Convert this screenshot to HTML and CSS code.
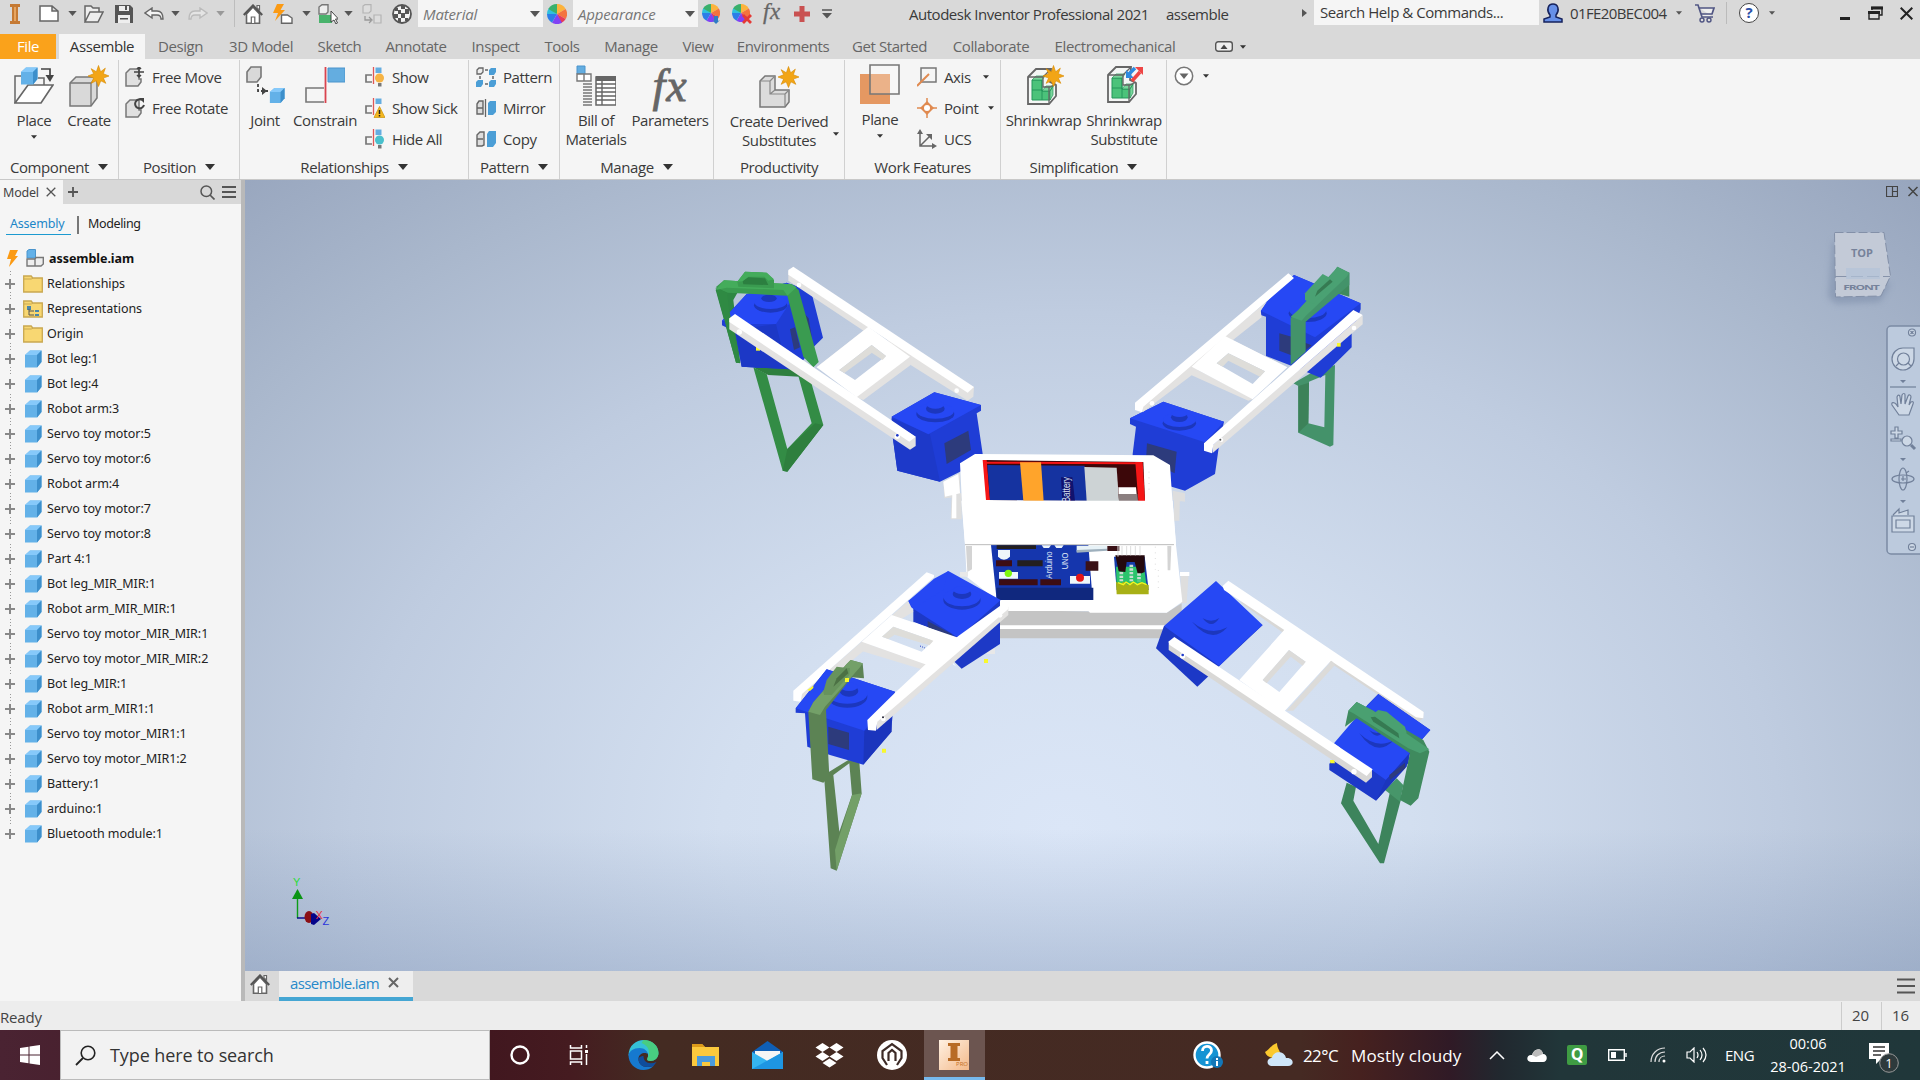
FILE: index.html
```html
<!DOCTYPE html>
<html lang="en">
<head>
<meta charset="utf-8">
<title>Autodesk Inventor Professional 2021</title>
<link rel="stylesheet" href="styles.css">
</head>
<body>
<svg class="defs" width="0" height="0">
  <symbol id="caret" viewBox="0 0 10 6"><path d="M0 0h10L5 6z" fill="currentColor"/></symbol>
  <symbol id="cube" viewBox="0 0 18 18"><path d="M1 5 6 .5h11.500V12L13 17.500H1z" fill="#63b1e8"/><path d="M1 5 6 .5h11.500L13 5z" fill="#86c9fa"/><path d="M13 5 17.500.5V12L13 17.500z" fill="#3d8fcb"/></symbol>
  <symbol id="folder" viewBox="0 0 20 18"><path d="M.7 1h7.500l1.500 2H19.300V17H.7z" fill="#f8d772" stroke="#c9a850" stroke-width="1.300"/><path d="M.7 4h8l1-1" fill="none" stroke="#c9a850"/></symbol>
  <symbol id="home" viewBox="0 0 20 20"><path d="M3.500 10v9.300h13V10L10 3z" fill="#fff" stroke="#666" stroke-width="1.600"/><path d="M.8 11 10 1.500l9.200 9.500" fill="none" stroke="#555" stroke-width="2.200"/><path d="M14 1.500h2.500V6L14 4zM8.300 19v-6h3.500v6" fill="#fff" stroke="#666" stroke-width="1.200"/></symbol>
  <symbol id="wheel" viewBox="-10 -10 20 20"><path d="M0 0 0-10A10 10 0 0 1 8.700-5z" fill="#fcb33c"/><path d="M0 0 8.700-5A10 10 0 0 1 8.700 5z" fill="#f4733e"/><path d="M0 0 8.700 5A10 10 0 0 1 4 9.200z" fill="#e63b58"/><path d="M0 0 5 8.700A10 10 0 0 1-5 8.700z" fill="#8142f4"/><path d="M0 0-5 8.700A10 10 0 0 1-10 0z" fill="#2c7de8"/><path d="M0 0-10 0A10 10 0 0 1-8 -6z" fill="#2fc0dd"/><path d="M0 0-8.700-5A10 10 0 0 1 0-10z" fill="#39b06b"/></symbol>
  <symbol id="star" viewBox="-10 -10 20 20"><path d="M0-10 2-4 6.500-7.500 4.600-2.200 10 0 4.600 2 7 7 2.200 4.600 0 10-2.200 4.600-7 7-4.600 2-10 0-4.600-2.200-7-7-2-4z" fill="#f2a516" stroke="#d88a00" stroke-width=".6"/></symbol>
  <symbol id="rel" viewBox="0 0 20 20"><path d="M7 8H1v7h6" fill="none" stroke="#777" stroke-width="1.700"/><path d="M8.500 0v17" stroke="#e05656" stroke-width="1.300"/><path d="M10.500.500h6v5.500h-6z" fill="#64ade0"/></symbol>
  <symbol id="piece" viewBox="0 0 20 20"><path d="M1 6 5 2h9v10h2v3l-3 4H1z" fill="#e0e0e0" stroke="#777" stroke-width="1.500"/></symbol>
  <symbol id="shrink" viewBox="0 0 30 38"><path d="M1 9 9 1h15l-1 13 6 3v11l-7 8H1z" fill="#f4f6f5" stroke="#666" stroke-width="1.800"/><path d="M5 12h10v11h8v9H5z" fill="#4bc27a" stroke="#25965a"/><path d="M5 12l4-4h9l-3 4zM15 23l4-5h7l-3 5zM23 23l3-5v9l-3 5z" fill="#7ad69c" stroke="#25965a" stroke-width=".7"/><path d="M5 22h10v10M15 12v11" fill="none" stroke="#25965a"/><path d="M1 9h15l8-8M16 9v10h7l6-3M22 19v17" fill="none" stroke="#666" stroke-width="1.300"/></symbol>
</svg>

<div class="app">
  <header class="titlebar">
    <div class="quick">
      <svg class="q-logo" viewBox="0 0 10 20"><path d="M0 0h10v3H8v14h2v3H0v-3h2V3H0z" fill="#c57a34"/><path d="M4 3h2v14H4z" fill="#e8a661"/></svg>
      <svg class="q-new" viewBox="0 0 20 17"><path d="M1 1h12l6 5v10H1zM13 1v5h6" fill="#fff" stroke="#666" stroke-width="1.500"/></svg>
      <svg class="caret q-c1"><use href="#caret"/></svg>
      <svg class="q-open" viewBox="0 0 20 18"><path d="M1 17V1h6l2 2h6v4M1 17 6 7h13l-5 10z" fill="#eee" stroke="#666" stroke-width="1.500"/></svg>
      <svg class="q-save" viewBox="0 0 18 18"><path d="M0 0h15l3 3v15H0z" fill="#555"/><path d="M4 1h10v5H4zM3 10h12v8H3z" fill="#eee"/><path d="M10 1h2v4h-2zM5 13h8v1.500H5z" fill="#555"/></svg>
      <svg class="q-undo" viewBox="0 0 20 14"><path d="M8 1 1 6l7 5V8h5c2 0 4 1 4 4h2c0-5-2-8-6-8H8z" fill="#f4f4f4" stroke="#666" stroke-width="1.400"/></svg>
      <svg class="caret q-c2"><use href="#caret"/></svg>
      <svg class="q-redo" viewBox="0 0 20 14"><path d="M12 1l7 5-7 5V8H7c-2 0-4 1-4 4H1c0-5 2-8 6-8h5z" fill="#e4e4e4" stroke="#bbb" stroke-width="1.400"/></svg>
      <svg class="caret q-c3"><use href="#caret"/></svg>
      <i class="q-sep"></i>
      <svg class="q-home"><use href="#home"/></svg>
      <svg class="q-bolt" viewBox="0 0 20 20"><path d="M4 0h7L7.500 6H12L2 17l3-8H0z" fill="#fb9a13"/><path d="M8.500 11h6l4.500 3v5.300H8.500z" fill="#fff" stroke="#666" stroke-width="1.400"/></svg>
      <svg class="caret q-c4"><use href="#caret"/></svg>
      <svg class="q-sel" viewBox="0 0 20 20"><path d="M1 3 4 .700h6V8L8 10H1z" fill="#eee" stroke="#777" stroke-width="1.400"/><path d="M1 11h13v8H1z" fill="#49b36c"/><path d="M13 7v11l3-2 2 4 1.500-1-2-4h3z" fill="#fff" stroke="#444"/></svg>
      <svg class="caret q-c5"><use href="#caret"/></svg>
      <svg class="q-adj" viewBox="0 0 20 20"><path d="M1 2 3 .700h6V7L7 9H1zM12 11h7v8h-7z" fill="#ddd" stroke="#b4b4b4" stroke-width="1.200"/><path d="M3 12v4h6M7 13l3 3-3 3" fill="none" stroke="#999" stroke-width="1.300"/></svg>
      <svg class="q-ball" viewBox="0 0 20 20"><circle cx="10" cy="10" r="9" fill="#f3f3f3" stroke="#555" stroke-width="1.800"/><path d="M3 4h3v3H3zM9 1h4v4H9zM6 6h3v4H6zM13 5h4v5h-4zM2 10h4v4H2zM9 9h4v5H9zM6 14h3v4H6zM13 14h3v3h-3z" fill="#555"/></svg>
      <div class="combo q-mat">Material<svg class="caret wide"><use href="#caret"/></svg></div>
      <svg class="q-wheel"><use href="#wheel"/></svg>
      <div class="combo q-app">Appearance<svg class="caret wide"><use href="#caret"/></svg></div>
      <svg class="q-w2" viewBox="0 0 20 20"><use href="#wheel" width="18" height="18"/><path d="M12 12h4v5l2-1-4 4-4-4 2 1z" fill="#2e7cc4"/></svg>
      <svg class="q-w3" viewBox="0 0 20 20"><use href="#wheel" width="18" height="18"/><path d="M11 11l8 8M19 11l-8 8" stroke="#e53935" stroke-width="2.800"/></svg>
      <span class="fx small">fx</span>
      <svg class="q-plus" viewBox="0 0 16 16"><path d="M5.500 0h5v5.500H16v5h-5.500V16h-5v-5.500H0v-5h5.500z" fill="#c95151"/></svg>
      <svg class="q-more" viewBox="0 0 10 10"><path d="M0 1h10" stroke="#555" stroke-width="1.500"/><path d="M0 4h10L5 9.500z" fill="#555"/></svg>
    </div>
    <div class="apptitle"><span>Autodesk Inventor Professional 2021</span><span>assemble</span></div>
    <div class="account">
      <svg class="a-arrow" viewBox="0 0 5 8"><path d="M0 0l5 4-5 4z" fill="#555"/></svg>
      <div class="help-search">Search Help &amp; Commands...</div>
      <svg class="a-user" viewBox="0 0 20 20"><path d="M1 19v-3l6-2v-2C3 7 5 1 10 1s7 6 3 11v2l6 2v3z" fill="#6790e8" stroke="#16225c" stroke-width="1.500"/></svg>
      <span class="a-name">01FE20BEC004</span>
      <svg class="caret tiny a-c1"><use href="#caret"/></svg>
      <svg class="a-cart" viewBox="0 0 20 19"><path d="M0 1h3l4 12h11M4 4h15l-2 6H6" fill="#eee" stroke="#505583" stroke-width="1.700"/><circle cx="7" cy="16" r="2" fill="#ddd" stroke="#505583" stroke-width="1.400"/><circle cx="14" cy="16" r="2" fill="#ddd" stroke="#505583" stroke-width="1.400"/></svg>
      <i class="a-sep"></i>
      <span class="a-help">?</span>
      <svg class="caret tiny a-c2"><use href="#caret"/></svg>
      <svg class="a-min" viewBox="0 0 10 14"><path d="M0 12.500h10" stroke="#222" stroke-width="3"/></svg>
      <svg class="a-res" viewBox="0 0 15 14"><path d="M4 4V1.500h10V9h-3M1 6.500h10V13H1z" fill="none" stroke="#222" stroke-width="1.400"/><path d="M3 2h12M0 6.500h12" stroke="#222" stroke-width="2.800"/></svg>
      <svg class="a-x" viewBox="0 0 13 13"><path d="M.7.700l11.600 11.600M12.300.700L.7 12.300" stroke="#222" stroke-width="2"/></svg>
    </div>
  </header>

  <nav class="tabs">
    <span class="file">File</span><span class="active">Assemble</span><span class="t1">Design</span><span class="t2">3D Model</span><span class="t3">Sketch</span><span class="t4">Annotate</span><span class="t5">Inspect</span><span class="t6">Tools</span><span class="t7">Manage</span><span class="t8">View</span><span class="t9">Environments</span><span class="t10">Get Started</span><span class="t11">Collaborate</span><span class="t12">Electromechanical</span>
    <svg class="t-btn" viewBox="0 0 18 11"><rect x=".7" y=".7" width="16.600" height="9.600" rx="2.500" fill="#eee" stroke="#555" stroke-width="1.400"/><path d="M5.500 8h7L9 3.500z" fill="#444"/></svg>
    <svg class="caret tiny dark"><use href="#caret"/></svg>
  </nav>

  <section class="ribbon">
    <div class="panel p-comp">
      <div class="body">
        <div class="big b-place"><svg viewBox="0 0 40 42"><path d="M8 11H1v27M24 13h6v7" fill="none" stroke="#666" stroke-width="1.500"/><path d="M14 20h25L27 38H1z" fill="#fff" stroke="#666" stroke-width="1.700"/><use href="#cube" x="6" y="2" width="18" height="18"/><path d="M27 4h9v8" fill="none" stroke="#444" stroke-width="1.700"/><path d="M31.500 10h8.500l-4 7z" fill="#444"/></svg><span>Place</span><svg class="caret tiny dark"><use href="#caret"/></svg></div>
        <div class="big b-create"><svg viewBox="0 0 40 42"><path d="M1 18 7 12h21v21l-6 8H1z" fill="#d9d9d9" stroke="#777" stroke-width="1.500"/><path d="M1 18h21v23M22 18l6-6" fill="none" stroke="#777" stroke-width="1.300"/><use href="#star" x="19" y="0" width="21" height="22"/></svg><span>Create</span></div>
      </div>
      <div class="label">Component<svg class="caret wide dark"><use href="#caret"/></svg></div>
    </div>
    <div class="panel p-pos">
      <div class="rows">
        <div><svg viewBox="0 0 20 20"><use href="#piece" width="20" height="20"/><path d="M14 0v10M9 5h10M12 2l2-2 2 2M12 8l2 2 2-2" fill="none" stroke="#444" stroke-width="1.500"/></svg>Free Move</div>
        <div><svg viewBox="0 0 20 20"><use href="#piece" width="20" height="20"/><path d="M17 2a4.500 4.500 0 1 0 2 5" fill="none" stroke="#444" stroke-width="2"/><path d="M14 0h5v5z" fill="#444"/></svg>Free Rotate</div>
      </div>
      <div class="label">Position<svg class="caret wide dark"><use href="#caret"/></svg></div>
    </div>
    <div class="panel p-rel">
      <div class="body">
        <div class="big b-joint"><svg viewBox="0 0 40 42"><path d="M2 7 6 2h10v10l-4 5H2z" fill="#d9d9d9" stroke="#777" stroke-width="1.600"/><path d="M13 19v7h10" fill="none" stroke="#444" stroke-width="1.800" stroke-dasharray="3 2"/><path d="M17 22l5 4-5 4z" fill="#444"/><use href="#cube" x="24" y="22" width="16" height="17"/></svg><span>Joint</span></div>
        <div class="big b-cons"><svg viewBox="0 0 40 42"><path d="M19 23H1v14h18" fill="none" stroke="#777" stroke-width="1.600"/><path d="M23 3h17v14H23z" fill="#64ade0" stroke="#4a94cc"/><path d="M20.500 2v36" stroke="#d9434e" stroke-width="1.800"/></svg><span>Constrain</span></div>
        <div class="rows">
          <div><svg viewBox="0 0 20 20"><use href="#rel" width="20" height="20"/><circle cx="14.500" cy="11" r="4.500" fill="#f6b445"/><path d="M13 16h3.500v3.500H13z" fill="#777"/></svg>Show</div>
          <div><svg viewBox="0 0 20 20"><use href="#rel" width="20" height="20"/><path d="M14.500 8.500 20 19.500H9z" fill="#f5b71e" stroke="#c8920c" stroke-width=".7"/><path d="M14.500 12v4M14.500 17v1.500" stroke="#222" stroke-width="1.500"/></svg>Show Sick</div>
          <div><svg viewBox="0 0 20 20"><use href="#rel" width="20" height="20"/><circle cx="14.500" cy="11" r="4.500" fill="#49c0cc"/><path d="M13 16h3.500v3.500H13z" fill="#777"/></svg>Hide All</div>
        </div>
      </div>
      <div class="label">Relationships<svg class="caret wide dark"><use href="#caret"/></svg></div>
    </div>
    <div class="panel p-pat">
      <div class="rows">
        <div><svg viewBox="0 0 20 20"><path d="M1 3l2-2h4v4L5 7H1z" fill="#eee" stroke="#666" stroke-width="1.300"/><path d="M9 3h3M4 9v3M17 9v3M9 17h3" stroke="#666" stroke-width="1.500"/><path d="M13 3l2-2h5v4l-2 3h-5zM0 15l2-2h5v4l-2 3H0zM13 15l2-2h5v4l-2 3h-5z" fill="#4b9ed6"/></svg>Pattern</div>
        <div><svg viewBox="0 0 20 20"><path d="M1 6 3 3h4v13H1zM1 10h6" fill="#ddd" stroke="#666" stroke-width="1.400"/><path d="M9.500 1v18" stroke="#666" stroke-width="1.300"/><path d="M12 5 14 3h6v11l-3 3h-5z" fill="#4b9ed6"/></svg>Mirror</div>
        <div><svg viewBox="0 0 20 20"><path d="M1 6 4 3h4v13l-2 1H1zM1 10h6" fill="#ddd" stroke="#666" stroke-width="1.400"/><path d="M11 5 13 2h7v12l-3 4h-6z" fill="#4b9ed6"/></svg>Copy</div>
      </div>
      <div class="label">Pattern<svg class="caret wide dark"><use href="#caret"/></svg></div>
    </div>
    <div class="panel p-man">
      <div class="body">
        <div class="big b-bom"><svg viewBox="0 0 40 42"><path d="M1 1h8v8H1z" fill="#64ade0" stroke="#4a94cc"/><path d="M1 9h7v7H1zM8 9h7v7H8z" fill="#fff" stroke="#777" stroke-width="1.400"/><path d="M7 19h9M7 22h9M7 25h9M7 28h9M7 31h9M7 34h9M7 37h9M7 40h9" stroke="#777" stroke-width="1.300"/><path d="M20 12h20v28H20z" fill="#fff" stroke="#666" stroke-width="1.500"/><path d="M20 14h20M20 19h20M20 23h20M20 27h20M20 31h20M20 35h20M26 14v26" stroke="#666" stroke-width="1.400"/><path d="M20 11h20v5H20z" fill="#666"/></svg><span>Bill of<br>Materials</span></div>
        <div class="big b-par"><div class="fx">fx</div><span>Parameters</span></div>
      </div>
      <div class="label">Manage<svg class="caret wide dark"><use href="#caret"/></svg></div>
    </div>
    <div class="panel p-prod">
      <div class="body">
        <div class="big b-der"><svg viewBox="0 0 40 42"><path d="M1 15 6 10h10v14h14v12l-4 5H1z" fill="#dcdcdc" stroke="#777" stroke-width="1.500"/><path d="M1 15h10v13h15v12M11 15l5-5M11 28l5-4M26 28l4-4" fill="none" stroke="#888" stroke-width="1.200"/><use href="#star" x="19" y="0" width="21" height="22"/></svg><span>Create Derived<br>Substitutes</span></div>
        <svg class="caret tiny dark side"><use href="#caret"/></svg>
      </div>
      <div class="label">Productivity</div>
    </div>
    <div class="panel p-work">
      <div class="body">
        <div class="big b-plane"><svg viewBox="0 0 40 42"><path d="M0 10h30v30H0z" fill="#e59862"/><path d="M10 1h29v29H10z" fill="#fff" fill-opacity=".25" stroke="#777" stroke-width="1.600"/></svg><span>Plane</span><svg class="caret tiny dark"><use href="#caret"/></svg></div>
        <div class="rows">
          <div><svg viewBox="0 0 20 20"><path d="M4 1h15v14H4z" fill="none" stroke="#777" stroke-width="1.500"/><path d="M0 19 12 7" stroke="#e08a50" stroke-width="2"/></svg>Axis<svg class="caret tiny dark c-a"><use href="#caret"/></svg></div>
          <div><svg viewBox="0 0 20 20"><path d="M10 3l7 7-7 7-7-7z" fill="#e08a50"/><path d="M10 0v20M0 10h20" stroke="#e08a50" stroke-width="1.500"/><circle cx="10" cy="10" r="3" fill="#fff"/></svg>Point<svg class="caret tiny dark c-p"><use href="#caret"/></svg></div>
          <div><svg viewBox="0 0 20 20"><path d="M3 2v15h15M3 17 13 7" fill="none" stroke="#666" stroke-width="1.500"/><path d="M0 5 3 0l3 5zM15 14l5 3-5 3zM9 5h6v6z" fill="#666"/></svg>UCS</div>
        </div>
      </div>
      <div class="label">Work Features</div>
    </div>
    <div class="panel p-simp">
      <div class="body">
        <div class="big b-shr"><svg viewBox="0 0 40 42"><use href="#shrink" x="0" y="3" width="36" height="38"/><use href="#star" x="19" y="0" width="21" height="22"/></svg><span>Shrinkwrap</span></div>
        <div class="big b-sub"><svg viewBox="0 0 40 42"><use href="#shrink" x="0" y="1" width="36" height="38"/><path d="M24 10 31 3" stroke="#2d8ae0" stroke-width="3.500"/><path d="M22 5v8h8z" fill="#2d8ae0"/><path d="M28 16l8-9" stroke="#ee4545" stroke-width="3.500"/><path d="M31 2h8v8z" fill="#ee4545"/></svg><span>Shrinkwrap<br>Substitute</span></div>
      </div>
      <div class="label">Simplification<svg class="caret wide dark"><use href="#caret"/></svg></div>
    </div>
    <div class="extra"><svg viewBox="0 0 20 20"><circle cx="10" cy="10" r="8.700" fill="#fff" stroke="#777" stroke-width="1.500"/><path d="M5.500 7.500h9L10 13z" fill="#666"/></svg><svg class="caret tiny dark"><use href="#caret"/></svg></div>
  </section>

  <main class="work">
    <aside class="browser">
      <div class="btabs">
        <span class="model">Model<svg viewBox="0 0 10 10"><path d="M.7.700l8.600 8.600M9.300.700L.7 9.300" stroke="#555" stroke-width="1.300"/></svg></span>
        <svg class="plus" viewBox="0 0 10 10"><path d="M5 0v10M0 5h10" stroke="#555" stroke-width="1.800"/></svg>
        <svg class="find" viewBox="0 0 15 15"><circle cx="6.300" cy="6.300" r="5.300" fill="none" stroke="#555" stroke-width="1.500"/><path d="M10 10l4.500 4.500" stroke="#555" stroke-width="1.700"/></svg>
        <svg class="menu" viewBox="0 0 14 12"><path d="M0 1h14M0 6h14M0 11h14" stroke="#555" stroke-width="1.800"/></svg>
      </div>
      <div class="modes"><span class="on">Assembly</span><i></i><span>Modeling</span></div>
      <div class="root"><svg class="bolt" viewBox="0 0 11 17"><path d="M3 0h8L8 6h3L2 17l2-8H0z" fill="#fb9a13"/></svg><svg class="asm" viewBox="0 0 18 18"><path d="M1 2 3 .500h6.500V9H1z" fill="#63b1e8" stroke="#4a94cc"/><path d="M1 10h8v7H1zM9 10l1-1.500h7.300V15L15 17H9z" fill="#eee" stroke="#777" stroke-width="1.400"/></svg>assemble.iam</div>
      <ul class="tree">
        <li><i></i><svg><use href="#folder"/></svg>Relationships</li>
        <li><i></i><svg viewBox="0 0 20 18"><use href="#folder" width="20" height="18"/><path d="M4 6h4v4H4zM12 10h4v2h-4zM12 14h4v2h-4z" fill="#4b86a8"/><path d="M6 9v6h5M6 11h5" fill="none" stroke="#555"/></svg>Representations</li>
        <li><i></i><svg><use href="#folder"/></svg>Origin</li>
        <li><i></i><svg><use href="#cube"/></svg>Bot leg:1</li>
        <li><i></i><svg><use href="#cube"/></svg>Bot leg:4</li>
        <li><i></i><svg><use href="#cube"/></svg>Robot arm:3</li>
        <li><i></i><svg><use href="#cube"/></svg>Servo toy motor:5</li>
        <li><i></i><svg><use href="#cube"/></svg>Servo toy motor:6</li>
        <li><i></i><svg><use href="#cube"/></svg>Robot arm:4</li>
        <li><i></i><svg><use href="#cube"/></svg>Servo toy motor:7</li>
        <li><i></i><svg><use href="#cube"/></svg>Servo toy motor:8</li>
        <li><i></i><svg><use href="#cube"/></svg>Part 4:1</li>
        <li><i></i><svg><use href="#cube"/></svg>Bot leg_MIR_MIR:1</li>
        <li><i></i><svg><use href="#cube"/></svg>Robot arm_MIR_MIR:1</li>
        <li><i></i><svg><use href="#cube"/></svg>Servo toy motor_MIR_MIR:1</li>
        <li><i></i><svg><use href="#cube"/></svg>Servo toy motor_MIR_MIR:2</li>
        <li><i></i><svg><use href="#cube"/></svg>Bot leg_MIR:1</li>
        <li><i></i><svg><use href="#cube"/></svg>Robot arm_MIR1:1</li>
        <li><i></i><svg><use href="#cube"/></svg>Servo toy motor_MIR1:1</li>
        <li><i></i><svg><use href="#cube"/></svg>Servo toy motor_MIR1:2</li>
        <li><i></i><svg><use href="#cube"/></svg>Battery:1</li>
        <li><i></i><svg><use href="#cube"/></svg>arduino:1</li>
        <li><i></i><svg><use href="#cube"/></svg>Bluetooth module:1</li>
      </ul>
    </aside>

    <div class="docarea">
      <div class="viewport">
        <svg class="scene" viewBox="245 180 1675 791">
          <g transform="translate(700 250) scale(.33333)">
            <!-- servos under the chassis -->
            <g>
              <path d="M575 500 703 427 843 465V482L830 490 850 625 780 665 720 695 592 662 578 560z" fill="#1f3dd6"/>
              <path d="M575 505 578 560 592 662 720 695 690 553z" fill="#1d39c9"/>
              <path d="M575 500 703 427 843 465 685 553z" fill="#2648f4"/>
              <ellipse cx="706" cy="492" rx="57" ry="25" fill="#1c37bd"/><ellipse cx="706" cy="483" rx="56" ry="23" fill="#2648f4"/>
              <ellipse cx="706" cy="476" rx="28" ry="15" fill="#1c37bd"/><ellipse cx="706" cy="464" rx="26" ry="12" fill="#2648f4"/>
              <path d="M733 580 805 542 813 600 740 642z" fill="#2d3b7c"/>
            </g>
            <g transform="translate(1140 0)">
              <path d="M150 505 250 455 432 515 418 580 405 672 315 722 275 710 158 650V612L168 530 150 522z" fill="#1f3dd6"/>
              <path d="M150 505 250 455 432 515 375 577z" fill="#2648f4"/>
              <ellipse cx="298" cy="520" rx="50" ry="22" fill="#1c37bd"/><ellipse cx="298" cy="510" rx="49" ry="21" fill="#2648f4"/><ellipse cx="298" cy="502" rx="25" ry="14" fill="#1c37bd"/><ellipse cx="298" cy="491" rx="24" ry="10" fill="#2648f4"/>
              <path d="M201 580 290 605 284 670 198 630z" fill="#2d3b7c"/>
            </g>
            <!-- chassis -->
            <path d="M730 695 780 670V740L733 745zM755 730H785V808H752zM1418 722 1455 730 1455 755 1418 750zM1422 735 1440 735 1438 812 1422 812zM1442 970 1466 970 1460 1060 1442 1060z" fill="#dedede"/>
            <path d="M730 695 775 672 780 730 735 740zM757 730h12v75h-14zM1440 966h28v12h-28z" fill="#fff"/>
            <path d="M900 1080 1400 1088 1445 1060V1120L1400 1128V1165H900z" fill="#c4c4c4"/>
            <path d="M900 1126H1400V1138L1200 1137H900z" fill="#fff"/>
            <path d="M780 640 825 612 1360 616 1410 645 1415 720 1428 885 1447 1055 1400 1088 1170 1088 1165 1083 905 1083 890 1050 800 980 795 885 785 740z" fill="#fff"/>
            <path d="M850 630 1330 636 1335 752 860 750z" fill="#3c0709"/>
            <path d="M848 630h12l10 120h-12zM860 635l450 2v6l-450-2zM1306 636h22l7 117h-20z" fill="#f51616"/>
            <path d="M862 645 1154 647 1162 752 870 750z" fill="#1533a0"/>
            <path d="M960 637 1023 637 1031 753 970 752z" fill="#ffa42b"/>
            <path d="M1153 651 1250 653 1257 753 1160 753z" fill="#cdd3d5"/>
            <path d="M1255 712 1308 712 1310 732 1256 732z" fill="#fff"/><path d="M1256 732 1312 732 1314 753 1257 753z" fill="#8b7f80"/>
            <path d="M1083 682h34l8 71h-38z" fill="#11126e"/>
            <text class="mark" transform="translate(1111 757) rotate(-90)" font-size="31" textLength="76" lengthAdjust="spacingAndGlyphs">Battery</text>
            <path d="M784 752H1418L1428 883H795z" fill="#fff"/>
            <path d="M873 885 1165 885 1178 1050 890 1050z" fill="#1536ad"/><path d="M889 1013H1180V1050H890z" fill="#10287e"/>
            <path d="M795 884H1422" stroke="#bcbcbc" stroke-width="3"/>
            <path d="M798 888h18v70l-14 8zM1402 888h12l-3 73h-8z" fill="#d4d4d4"/>
            <path d="M890 886h118v11H890zM952 931h76v18h-76z" fill="#231f20"/>
            <path d="M888 931h48v18h-48zM897 988h116v18H897zM1021 988h62v18h-62z" fill="#3d0d14"/>
            <path d="M1025 886h28l-6 8h-16zM1063 886h28l-6 8h-16zM894 900h36v20q-18 18-36 0zM897 966h57v20h-57zM1110 978h60v23h-60z" fill="#eef6fa"/>
            <circle cx="925" cy="970" r="11" fill="#7df60d"/><circle cx="1140" cy="983" r="12" fill="#e31616"/>
            <path d="M1130 887h92v14l-92 4z" fill="#e7f2f7"/><path d="M1130 900l92-4v6l-92 6z" fill="#9eb0bd"/><path d="M1222 888h36v15h-36zM1157 934h38v28h-38z" fill="#3a1116"/>
            <text class="mark" transform="translate(1056 986) rotate(-90)" font-size="28" textLength="82" lengthAdjust="spacingAndGlyphs">Arduino</text>
            <text class="mark" transform="translate(1104 958) rotate(-90)" font-size="28" textLength="50" lengthAdjust="spacingAndGlyphs">UNO</text>
            <g transform="translate(1140 0)">
              <path d="M102 920h92l12 100h-96z" fill="#143caa"/><path d="M108 950h84l8 60h-90z" fill="#2bc46c"/>
              <path d="M106 916h88v50l-20 8-10-38h-24l-4 30-20-2z" fill="#24080d"/>
              <path d="M108 995l14 8 8-8 14 10 12-10 12 10 12-8 26 8v28h-96z" fill="#a8b016"/><path d="M114 998l16 6 8-8 12 8 10-8 12 8 14-6 14 6" fill="none" stroke="#f3f620" stroke-width="4"/>
              <path d="M124 966v28M154 944v50M177 970v24" stroke="#c9ddd2" stroke-width="11" stroke-dasharray="7 4"/>
              <path d="M114 888v32M126 888v28M140 888v28M152 888v28M166 888v28M180 888v28" stroke="#ddd" stroke-width="3"/>
              <path d="M207 665v60M226 890v70M235 960v60" stroke="#ccc" stroke-width="2" stroke-dasharray="3 14"/>
            </g>
            <!-- top-left leg -->
            <g>
              <path d="M160 352 248 662 262 665 370 525 330 385 295 378 335 520 262 597 200 372z" fill="#338c45"/>
              <path d="M160 350 290 355 300 380 205 375 170 358zM248 662 262 597 345 520 370 525 262 665z" fill="#2e7f3e"/>
              <path d="M47 120 75 92 114 125 100 150 121 340 108 338z" fill="#2e8743"/>
              <path d="M66 212 140 132 260 98 333 122 369 263 340 292 310 330 270 358 125 350 105 245 66 226z" fill="#1f3dd6"/>
              <path d="M66 212 140 132 260 98 275 150 228 222 150 222z" fill="#2648f4"/>
              <path d="M228 222 255 330 270 358 125 350 105 240z" fill="#1c38c6"/>
              <ellipse cx="212" cy="166" rx="50" ry="22" fill="#1c37bd"/><ellipse cx="212" cy="157" rx="49" ry="20" fill="#2648f4"/><ellipse cx="207" cy="145" rx="23" ry="11" fill="#1c37bd"/>
              <path d="M270 238 285 232 300 292 282 300zM312 190l14 15 10 60-10-20z" fill="#2d3b7c"/>
              <path d="M47 112 72 91 275 103 296 120 356 336 340 352 310 320 262 137 82 128z" fill="#3a9b50"/>
              <path d="M47 114 82 128 86 170 118 338 108 338z" fill="#2f8a43"/>
              <path d="M72 91 275 103 290 112 262 137 250 120 80 113 47 120z" fill="#44ac5b"/>
              <path d="M112 95 135 65 200 68 222 90V115L115 110z" fill="#3a9b50"/><path d="M128 92 145 82 195 85 205 105 130 103z" fill="#2c7f40"/><path d="M135 65 200 68 222 88 205 92 193 80H145L128 94 112 95z" fill="#44ac5b"/>
              <path d="M168 290h12v12h-12z" fill="#f8f82c"/>
              <path d="M265 62V92L495 245 520 225 632 345 803 452 820 440 822 412z" fill="#e3e2e1"/>
              <path d="M265 60 280 50 822 411 803 428 265 74z" fill="#fff"/>
              <path d="M632 316V345L490 450 468 442zM503 232V246L365 358 350 352z" fill="#e3e2e1"/>
              <path fill="#fff" fill-rule="evenodd" d="M505 230 630 320 470 442 350 352zM515 285 558 318 465 390 418 360z"/>
              <path d="M515 285v24l-82 60-15-9z M515 285l43 33-10 12-33-22z" fill="#deddd9"/>
              <path d="M88 205V238L630 599 647 588V560z" fill="#e3e2e1"/>
              <path d="M88 205 105 192 647 560 628 575 88 216z" fill="#fff"/>
              <circle cx="118" cy="246" r="8" fill="#fff"/><circle cx="297" cy="105" r="7" fill="#fff"/><circle cx="770" cy="422" r="7" fill="#fff"/><circle cx="592" cy="559" r="8" fill="#fff"/><circle cx="592" cy="556" r="4" fill="#1d39c9"/>
            </g>
            <!-- top-right leg -->
            <g transform="translate(1140 0)">
              <path d="M640 400 700 365 765 345 760 585 750 590 655 548V408zM687 395 685 520 733 532 736 375z" fill="#44926a" fill-rule="evenodd"/>
              <path d="M655 408 687 398 685 520 655 548z" fill="#3c8259"/>
              <path d="M542 182 625 90 642 75 842 160V178L815 250V292L722 383 628 345 558 318V200L542 195z" fill="#1f3dd6"/>
              <path d="M542 182 560 155 642 75 842 160 705 262z" fill="#2648f4"/>
              <ellipse cx="683" cy="190" rx="57" ry="26" fill="#1c37bd"/><ellipse cx="683" cy="180" rx="56" ry="24" fill="#2648f4"/>
              <path d="M598 250 640 262V318L598 302zM675 278l20 8-20 16z" fill="#2d3b7c"/>
              <path d="M770 62 808 68V140L765 128z" fill="#3f8a5c"/>
              <path d="M632 205 655 180 765 60 772 50 808 68V105L677 215V305L632 345z" fill="#43936a"/>
              <path d="M632 200 655 180 765 60 772 50 808 68 800 80 675 200 665 212z" fill="#4aa173"/>
              <path d="M675 130 728 72 762 90 758 105 700 162 675 150z" fill="#4aa173"/><path d="M705 140 712 122 750 88 758 95z" fill="#367a52"/>
              <path d="M188 462V487L335 376 440 285 545 202 542 182 560 155z" fill="#e3e2e1"/>
              <path d="M165 458 625 70 642 84 190 470 186 487 165 480z" fill="#fff"/>
              <path d="M335 350V376L505 452 520 447zM438 260V272L600 356 622 352z" fill="#e3e2e1"/>
              <path d="M435 258 622 352 518 448 335 350zM445 310 555 364 518 402 410 340z" fill="#fff" fill-rule="evenodd"/>
              <path d="M445 310 555 364 540 380 445 332 428 350 410 340z" fill="#deddd9"/>
              <path d="M398 585V609L848 223V195z" fill="#e3e2e1"/>
              <path d="M372 580 820 180 848 195 400 584 396 610 372 602z" fill="#fff"/>
              <circle cx="822" cy="234" r="7" fill="#fff"/><circle cx="424" cy="570" r="6" fill="#fff"/><circle cx="421" cy="569" r="3" fill="#555"/><circle cx="216" cy="460" r="7" fill="#fff"/><path d="M771 279h11v11h-11z" fill="#f8f82c"/>
            </g>
            <!-- bottom-left leg -->
            <g transform="translate(240 870)">
              <path d="M540 96h24v14h-24zM620 335 645 325V342h-25z" fill="#e8e8e8"/>
              <path d="M400 190V245L545 386 660 312V180z" fill="#1d39c6"/>
              <path d="M400 245 530 380 518 372 520 290z" fill="#fff"/>
              <path d="M443 243 515 282 520 292 443 262z" fill="#2d3b7c"/>
              <path d="M385 183 505 93 662 180 535 293 387 198z" fill="#2648f4"/>
              <ellipse cx="546" cy="180" rx="56" ry="29" fill="#1c37bd"/><ellipse cx="546" cy="172" rx="55" ry="27" fill="#2648f4"/><ellipse cx="546" cy="162" rx="28" ry="15" fill="#1c37bd"/><ellipse cx="546" cy="150" rx="26" ry="12" fill="#2648f4"/>
              <path d="M65 462V485L248 335 340 252 400 215 385 183z" fill="#e3e2e1"/>
              <path d="M385 183 462 116 505 93 490 150 400 205z" fill="#2648f4"/>
              <path d="M40 452 440 97 462 105V112L66 462 62 485 40 482z" fill="#fff"/>
              <path d="M247 306V334L425 388 441 373z" fill="#e3e2e1"/>
              <path d="M335 225 535 293 440 374 245 305zM340 260 460 302 425 335 306 290z" fill="#fff" fill-rule="evenodd"/>
              <path d="M340 260 460 302 448 316 344 284 325 297 306 290z" fill="#deddd9"/><path d="M420 318l15 6" stroke="#1d39c6" stroke-width="3" stroke-dasharray="3 4"/>
              <path d="M132 705 205 660 238 665 245 760 170 992 152 985zM160 705 178 875 216 765 208 670z" fill="#5c8354" fill-rule="evenodd"/>
              <path d="M216 765 245 760 170 992 165 930z" fill="#73a068"/>
              <path d="M47 505 140 388 345 455 333 575 250 674 150 645 82 620 75 520 47 518z" fill="#1f3dd6"/>
              <path d="M47 505 140 388 345 455 253 572z" fill="#2648f4"/><path d="M253 572 335 530V575L250 674z" fill="#1b35bd"/>
              <ellipse cx="202" cy="470" rx="60" ry="33" fill="#1c37bd"/><ellipse cx="202" cy="461" rx="60" ry="30" fill="#2648f4"/><ellipse cx="207" cy="453" rx="28" ry="17" fill="#1c37bd"/><ellipse cx="207" cy="440" rx="26" ry="13" fill="#2648f4"/>
              <path d="M145 560 207 578V630L145 612z" fill="#2d3b7c"/>
              <path d="M85 515 100 487 200 372 212 360 248 370 252 415 215 412 138 510 148 710 130 728 97 718z" fill="#5c8354"/>
              <path d="M85 515 100 487 200 372 212 360 248 370 240 382 135 500 120 525z" fill="#73a068"/>
              <path d="M130 455 140 420 170 380 210 385 208 405 155 465 132 465z" fill="#67935d"/><path d="M160 440 170 415 200 385 205 400z" fill="#4c7144"/>
              <path d="M290 540V570L685 225V200z" fill="#e3e2e1"/>
              <path d="M262 540 345 458 440 370 535 288 668 192 685 200V207L292 545 288 572 264 570z" fill="#fff"/>
              <circle cx="660" cy="226" r="7" fill="#fff"/><circle cx="310" cy="537" r="7" fill="#fff"/><circle cx="309" cy="532" r="3" fill="#223"/>
              <path d="M195 414h12v12h-12zM612 357h12v12h-12zM306 626h12v12h-12zM82 450 100 437 100 444 90 453z" fill="#f8f82c"/>
            </g>
            <!-- bottom-right leg -->
            <g transform="translate(1140 870)">
              <path d="M252 258 228 325 352 440 490 310 548 255z" fill="#1c38c6"/>
              <path d="M252 258 408 123 548 255 485 312 418 378z" fill="#2648f4"/>
              <path d="M336 245Q390 290 442 262 395 315 336 245zM368 235Q395 250 418 234 395 270 368 235z" fill="#1c37bd"/>
              <path d="M484 175V190L605 275 760 375 1015 545 1030 535V515z" fill="#d9d8d6"/>
              <path d="M428 138 445 122 1031 516 1030 535 1008 532 432 150z" fill="#fff"/>
              <path d="M755 362 620 512 640 512 765 375z" fill="#dcdbd9"/>
              <path d="M620 262 755 360 612 515 478 420zM627 330 677 365 598 456 548 420z" fill="#fff" fill-rule="evenodd"/>
              <path d="M627 330 677 365 668 377 632 350 560 430 548 420z" fill="#dcdbd9"/>
              <path d="M800 728 783 790 900 970 912 970 965 770 930 755 895 912 820 782 828 740z" fill="#3d845c"/>
              <path d="M915 750 950 715 970 735 960 785z" fill="#47966a"/>
              <path d="M862 495 895 462 1051 570 1020 605 990 640 985 670 888 782 748 690 748 672z" fill="#1d39c9"/>
              <path d="M762 610 830 530 895 462 1051 570 988 640 918 720z" fill="#2648f4"/><path d="M918 720 985 645 980 680 888 782z" fill="#1b35bd"/><path d="M928 705 975 668V685L930 720z" fill="#2d3b7c"/>
              <path d="M838 580Q890 630 942 600 890 655 838 580zM868 570Q890 588 914 570 892 604 868 570z" fill="#1c37bd"/>
              <path d="M795 560 805 512 830 486 880 512 1030 600 1048 635 1015 775 992 797 960 780 990 640 830 535z" fill="#3f8a5e"/>
              <path d="M805 512 830 486 880 512 1048 628 1020 640 985 625 820 520z" fill="#4aa071"/>
              <path d="M868 530 895 510 920 515 975 560 980 580 960 595 880 545z" fill="#4aa071"/><path d="M872 532 885 530 955 580 958 595 880 545z" fill="#367a52"/>
              <path d="M266 310V330L858 728 876 712V690z" fill="#d9d8d6"/>
              <path d="M265 305 283 291 878 688 860 708 268 314z" fill="#fff"/>
              <circle cx="308" cy="348" r="8" fill="#fff"/><circle cx="308" cy="345" r="4" fill="#1d39c9"/><circle cx="822" cy="695" r="8" fill="#fff"/>
              <path d="M750 660h12l3 10h-14z" fill="#f8f82c"/>
            </g>
          </g>
          <!-- axis triad -->
          <path d="M297.500 918V893" stroke="#0c9c18" stroke-width="1.400"/><path d="M292 899 297.500 889 303 899z" fill="#0b9414"/>
          <path d="M297 918h14" stroke="#00008c" stroke-width="1.400"/><ellipse cx="309" cy="917" rx="4.500" ry="6" fill="#8b0f14"/><path d="M311 914l3-1 7 6-7 6-3-1z" fill="#05058a"/>
          <text x="293" y="886" class="ax" fill="#2bdc38">Y</text><text x="315.500" y="919" class="ax" fill="#e83340">X</text><text x="322.500" y="925" class="ax" fill="#2934dc">Z</text>
          <!-- view cube -->
          <path class="shade" d="M1833 240 1828 297 1836 304 1880 302 1890 285z"/>
          <path d="M1834.500 232.500H1884L1890.500 276 1881 296 1835.500 297z" fill="#c3cad7" stroke="#8390a8" stroke-dasharray="9 3"/>
          <path d="M1835 276.500H1890" stroke="#8793aa" stroke-dasharray="12 4"/><path d="M1846 268h34v11h-34z" fill="#b3c3d8" opacity=".7"/>
          <text x="1862" y="257" text-anchor="middle" class="cubetext" textLength="22">TOP</text>
          <text transform="translate(1861.500 290) scale(1.350 .8)" text-anchor="middle" class="cubetext low" textLength="27">FRONT</text>
        </svg>
        <div class="wincontrols"><svg viewBox="0 0 12 11"><path d="M.5.500h11v10H.5zM6.500.500v10M6.500 5.500h5" fill="none" stroke="#444" stroke-width="1.200"/></svg><svg viewBox="0 0 11 11"><path d="M1 1l9 9M10 1l-9 9" stroke="#444" stroke-width="1.500"/></svg></div>
        <svg class="navbar" viewBox="0 0 34 230">
          <rect x="1" y="1" width="36" height="228" rx="4" fill="#bccadd" stroke="#7b8ba4" stroke-width="1.500"/>
          <g fill="#cdd8e6" stroke="#71809a" stroke-width="1.200"><circle cx="26" cy="7.500" r="3.500"/><path d="M24.500 6l3 3M27.500 6l-3 3" /><circle cx="26" cy="222" r="3.500"/><path d="M24 222h4"/>
          <path d="M17 23h11v11a11 11 0 1 1-11-11z"/><circle cx="17.500" cy="34" r="6"/><path d="M13 38l-3 3M22 38l3 3"/>
          <path d="M4 62h26"/>
          <path d="M13 90 6 80c-1-3 2-3 4-1l2 3-1-10c1-3 3-2 3 0l1 7 1-9c1-2 3-2 3 0v9l3-8c1-2 3-1 3 1l-2 8 2-3c2-1 3 0 2 2l-4 11z"/>
          <path d="M9 102h3v4h4v3h-4v4H9v-4H5v-3h4zM5 114h10v2H5z"/><circle cx="21" cy="116" r="5"/><path d="M25 120l4 4" stroke-width="3"/>
          <ellipse cx="17" cy="154" rx="11" ry="4" fill="none"/><ellipse cx="17" cy="154" rx="4" ry="11" fill="none"/><path d="M15 154h5M17 151v5M20 148l3-2" />
          <path d="M6 191h22v16H6zM10 195h14v8H10zM7 190l6-6v4l9-3v5"/></g>
          <path d="M14 55h6l-3 3zM14 133h6l-3 3zM14 175h6l-3 3z" fill="#71809a"/>
        </svg>
      </div>
      <div class="doctabs"><svg class="dhome"><use href="#home"/></svg><div class="doc">assemble.iam<svg viewBox="0 0 11 11"><path d="M1 1l9 9M10 1l-9 9" stroke="#666" stroke-width="2"/></svg></div><svg class="dmenu" viewBox="0 0 18 16"><path d="M0 1.500h18M0 8h18M0 14.500h18" stroke="#555" stroke-width="2"/></svg></div>
    </div>
  </main>

  <div class="status"><span>Ready</span><b>20</b><b>16</b></div>

  <footer class="taskbar">
    <div class="start"><svg viewBox="0 0 20 20"><path d="M0 3 8.500 1.800V9.500H0zM9.500 1.600 20 0v9.500H9.500zM0 10.500h8.500v7.700L0 17zM9.500 10.500H20V20L9.500 18.400z" fill="#fff"/></svg></div>
    <div class="search"><svg viewBox="0 0 21 21"><circle cx="13" cy="8" r="6.800" fill="none" stroke="#222" stroke-width="1.600"/><path d="M8 13 1 20" stroke="#222" stroke-width="1.800"/></svg>Type here to search</div>
    <div class="pins">
      <svg class="k1" viewBox="0 0 20 20"><circle cx="10" cy="10" r="8.500" fill="none" stroke="#fff" stroke-width="2.400"/></svg>
      <svg class="k2" viewBox="0 0 20 20"><path d="M1 0v3h11V0M1 6h11v8H1zM1 20v-3h11v3M17 0v3M17 9v11" fill="none" stroke="#fff" stroke-width="1.500"/><path d="M15.500 5h3v3h-3z" fill="#fff"/></svg>
      <svg class="k3" viewBox="0 0 30 30"><path d="M0 16C0 5 8 0 15 0c9 0 15 6 15 13 0 5-4 8-8 8-3 0-4-1-3-3 2-4-1-8-6-8C6 10 1 13 0 16z" fill="#35c1d6"/><path d="M15 0c9 0 15 6 15 13 0 5-4 8-8 8-3 0-4-1-3-3 3-5 2-12-6-15z" fill="#4dd06c" opacity=".8"/><path d="M0 15c1-4 5-7 11-7 5 0 8 3 8 6-2-2-9-1-9 5s6 10 15 7c-3 3-7 4-10 4C6 30 0 23 0 15z" fill="#1679cf"/><path d="M10 19c0 6 6 10 15 7l3-4c-8 3-13 0-13-6-2 0-5 1-5 3z" fill="#0f4d9c"/></svg>
      <svg class="k4" viewBox="0 0 28 24"><path d="M0 1h10l3 3h14v19H0z" fill="#fbc93d"/><path d="M0 1h10l3 3H0z" fill="#dc9a1a"/><path d="M5 23V13h18v10h-5v-4h-8v4z" fill="#4b9bdc"/></svg>
      <svg class="k5" viewBox="0 0 31 28"><path d="M0 11 15.500 0 31 11v17H0z" fill="#0f5fb6"/><path d="M3 10h25v12H3z" fill="#f5f5f5"/><path d="M0 11l15.500 9L31 11v17H0z" fill="#35b4f0"/><path d="M0 28 31 11v17z" fill="#1e96e2"/></svg>
      <svg class="k6" viewBox="0 0 28 25"><path d="M7 0l7 4.500L7 9 0 4.500zM21 0l7 4.500L21 9l-7-4.500zM7 9l7 4.500L7 18 0 13.500zM21 9l7 4.500-7 4.500-7-4.500zM14 15.500l7 4.500-7 4.500L7 20z" fill="#fff"/></svg>
      <svg class="k7" viewBox="0 0 30 30"><circle cx="15" cy="15" r="15" fill="#fff"/><path d="M10 25 5.500 18V11L15 4l9.500 7v7L20 25M11.500 21v-8L15 10l3.500 3v8" fill="none" stroke="#3d2b27" stroke-width="2.200"/></svg>
      <div class="inv"><div><svg viewBox="0 0 12 18"><path d="M0 0h12v3h-2.500v12H12v3H0v-3h2.500V3H0z" fill="#b86b25"/></svg><small>PRO</small></div></div>
    </div>
    <div class="tray">
      <svg class="y1" viewBox="0 0 30 28"><circle cx="14" cy="14" r="12.500" fill="#1593d3" stroke="#fff" stroke-width="2.400"/><path d="M9.500 10c0-6 9-6 9-.5 0 4-4.500 4-4.500 8M14 20v3" stroke="#fff" stroke-width="2.800" fill="none"/><circle cx="24" cy="21" r="6" fill="#1377b8"/><path d="M24 17v2M24 20v5" stroke="#fff" stroke-width="2"/></svg>
      <svg class="y2" viewBox="0 0 28 24"><path d="M12 0C6 2 4 7 0 9c2 6 10 8 15 3 1-4-3-6-3-12z" fill="#fbc92e"/><path d="M7 23c-6 0-6-8 0-8 1-7 12-8 14 0 8-1 9 8 2 8z" fill="#cfe6f9"/></svg>
      <span class="temp">22°C</span><span class="sky">Mostly cloudy</span>
      <svg class="y3" viewBox="0 0 16 9"><path d="M1 8l7-7 7 7" fill="none" stroke="#fff" stroke-width="1.500"/></svg>
      <svg class="y4" viewBox="0 0 20 13"><path d="M4 13c-6-1-4-8 1-7 2-7 10-8 11-1 5 0 5 8 0 8z" fill="#fff"/><path d="M5 6c2-7 10-8 11-1l-7 3z" fill="#bbb"/></svg>
      <span class="y5">Q</span>
      <svg class="y6" viewBox="0 0 19 12"><path d="M.7.700h15.600v10.600H.7zM18 4v4" fill="none" stroke="#fff" stroke-width="1.400"/><path d="M3 3h5v6H3z" fill="#fff"/></svg>
      <svg class="y7" viewBox="0 0 16 16"><path d="M1 15C1 7 7 1 15 1M5 15C5 9 9 5 15 5M9 15c0-3 2-6 6-6" fill="none" stroke="#ddd" stroke-width="1.200"/><circle cx="14" cy="14" r="1.500" fill="#fff"/></svg>
      <svg class="y8" viewBox="0 0 22 16"><path d="M1 5h3l4-4v14l-4-4H1zM11 5q2 3 0 6M14 3q4 5 0 10M17 1q6 7 0 14" fill="none" stroke="#fff" stroke-width="1.200"/></svg>
      <span class="lang">ENG</span>
      <span class="clock">00:06<br>28-06-2021</span>
      <svg class="y9" viewBox="0 0 32 32"><path d="M0 1h20v16h-8l-5 5v-5H0z" fill="#fff"/><path d="M4 5h12M4 9h12M4 13h8" stroke="#333" stroke-width="1.300"/><circle cx="20" cy="21" r="9.300" fill="#2e3a3c" stroke="#999"/><text x="20" y="26" text-anchor="middle" class="badge">1</text></svg>
    </div>
  </footer>
</div>
</body>
</html>
```
FILE: styles.css
```css
* { box-sizing: border-box; }
body { margin: 0; overflow: hidden; font-family: "Open Sans", "Noto Sans", sans-serif; font-size: 15px; color: #3a3a3a; }
svg { display: block; flex: none; }
.defs { position: absolute; }
.app { width: 1920px; height: 1080px; display: flex; flex-direction: column; background: #f5f5f5; }
.caret { width: 9px; height: 5px; color: #555; }
.caret.wide { width: 10px; height: 6px; }
.caret.tiny { width: 6px; height: 4px; }
.caret.dark { color: #333; }

/* title bar */
.titlebar { height: 34px; background: #d9d9d9; display: flex; white-space: nowrap; }
.quick { width: 909px; height: 27px; display: flex; align-items: center; padding-left: 10px; }
.q-logo { width: 10px; height: 20px; }
.q-new { width: 20px; height: 17px; margin-left: 19px; }
.q-c1 { margin-left: 9px; }
.q-open { width: 20px; height: 18px; margin-left: 7px; }
.q-save { width: 18px; height: 18px; margin-left: 11px; }
.q-undo { width: 20px; height: 14px; margin-left: 11px; }
.q-c2 { margin-left: 7px; }
.q-redo { width: 20px; height: 14px; margin-left: 8px; }
.q-c3 { margin-left: 8px; color: #999; }
.q-sep { width: 1px; height: 27px; background: #bdbdbd; margin-left: 9px; }
.q-home { width: 20px; height: 20px; margin-left: 8px; }
.q-bolt { width: 20px; height: 20px; margin-left: 10px; }
.q-c4 { margin-left: 9px; }
.q-sel { width: 20px; height: 20px; margin-left: 7px; }
.q-c5 { margin-left: 6px; }
.q-adj { width: 20px; height: 20px; margin-left: 9px; }
.q-ball { width: 20px; height: 20px; margin-left: 10px; }
.combo { height: 27px; background: #f5f5f5; display: flex; align-items: center; justify-content: space-between; font-style: italic; color: #777; padding: 0 3px 0 5px; letter-spacing: -.15px; }
.q-mat { width: 125px; margin-left: 6px; }
.q-wheel { width: 20px; height: 20px; margin: 0 6px 0 4px; }
.q-app { width: 125px; }
.q-w2 { width: 20px; height: 20px; margin-left: 4px; }
.q-w3 { width: 20px; height: 20px; margin-left: 10px; }
.fx { font-family: "Liberation Serif", serif; font-style: italic; font-size: 46px; line-height: 42px; height: 42px; color: #666; letter-spacing: 1px; -webkit-text-stroke: .8px #666; }
.fx.small { font-size: 23px; line-height: 24px; height: 27px; width: 20px; margin-left: 11px; letter-spacing: .5px; -webkit-text-stroke: .3px #666; }
.q-plus { width: 16px; height: 16px; margin-left: 11px; }
.q-more { width: 10px; height: 10px; margin-left: 12px; }
.apptitle { width: 393px; display: flex; gap: 17px; line-height: 29px; letter-spacing: -.48px; }
.account { flex: 1; height: 26px; display: flex; align-items: center; }
.a-arrow { width: 5px; height: 8px; }
.help-search { width: 225px; height: 25px; margin-left: 7px; padding-left: 6px; background: #f5f5f5; line-height: 25px; letter-spacing: -.45px; align-self: flex-start; }
.a-user { width: 20px; height: 20px; margin-left: 4px; }
.a-name { width: 113px; padding-left: 7px; letter-spacing: -.6px; }
.a-cart { width: 20px; height: 19px; margin-left: 13px; }
.a-sep { width: 1px; height: 22px; background: #bbb; margin-left: 11px; }
.a-help { width: 20px; height: 20px; margin-left: 12px; border: 1.5px solid #444; border-radius: 50%; background: #fff; color: #2b50a8; font-weight: 700; line-height: 17px; text-align: center; }
.a-c2 { margin-left: 10px; }
.a-min { width: 10px; height: 14px; margin-left: 65px; }
.a-res { width: 15px; height: 14px; margin-left: 18px; }
.a-x { width: 13px; height: 13px; margin-left: 17px; }

/* tabs */
.tabs { height: 25px; background: #d9d9d9; display: flex; align-items: center; color: #666; white-space: nowrap; }
.tabs span { text-align: center; line-height: 25px; height: 25px; letter-spacing: -.4px; }
.tabs .file { width: 56px; background: #faa21b; color: #fff; margin-right: 3px; }
.tabs .active { width: 86px; background: #f5f5f5; color: #333; }
.t1 { width: 71px; } .t2 { width: 90px; } .t3 { width: 67px; } .t4 { width: 86px; } .t5 { width: 73px; } .t6 { width: 60px; }
.t7 { width: 78px; } .t8 { width: 56px; } .t9 { width: 114px; } .t10 { width: 99px; } .t11 { width: 104px; } .t12 { width: 144px; }
.t-btn { width: 18px; height: 11px; margin-left: 28px; margin-right: 7px; }

/* ribbon */
.ribbon { height: 121px; background: #f5f5f5; border-bottom: 1px solid #c8c8c8; display: flex; letter-spacing: -.4px; white-space: nowrap; }
.panel { display: flex; flex-direction: column; border-right: 1px solid #d0d0d0; height: 119px; margin-top: 1px; }
.body { display: flex; height: 96px; }
.rows { height: 96px; display: flex; flex-direction: column; }
.rows > div { height: 31px; display: flex; align-items: center; gap: 7px; padding-top: 3px; }
.rows > div > svg:first-child { width: 20px; height: 20px; }
.label { flex: 1; display: flex; align-items: center; justify-content: center; gap: 9px; padding-bottom: 1px; }
.big { display: flex; flex-direction: column; align-items: center; padding-top: 5px; text-align: center; line-height: 19px; flex: none; }
.big > svg:first-child { width: 40px; height: 42px; }
.big > span { margin-top: 4px; }
.big > .caret { margin-top: 5px; }
.p-comp { width: 119px; } .b-place { width: 60px; margin-left: 4px; } .b-create { width: 50px; }
.p-pos { width: 121px; } .p-pos .rows { padding-left: 6px; }
.p-rel { width: 229px; } .b-joint { width: 50px; } .b-cons { width: 70px; } .p-rel .rows { padding-left: 5px; }
.p-pat { width: 91px; } .p-pat .rows { padding-left: 7px; }
.p-man { width: 154px; } .b-bom { width: 72px; } .b-par { width: 76px; }
.p-prod { width: 131px; } .b-der { width: 118px; margin-left: 6px; padding-top: 6px; } .side { margin-top: 72px; margin-left: -5px; }
.p-work { width: 156px; } .b-plane { width: 70px; padding-top: 4px; } .p-work .rows { padding-left: 2px; }
.c-a { margin-left: 5px; } .c-p { margin-left: 3px; }
.p-simp { width: 166px; } .b-shr { width: 85px; } .b-sub { width: 76px; }
.extra { display: flex; align-items: center; height: 34px; gap: 9px; padding: 0 0 0 7px; }
.extra > svg:first-child { width: 20px; height: 20px; }

/* model browser */
.work { height: 821px; display: flex; }
.browser { width: 245px; border-right: 4px solid #b9b9b9; background: #f5f5f5; font-family: "Noto Sans", sans-serif; font-size: 12.5px; color: #222; white-space: nowrap; letter-spacing: -.05px; }
.btabs { height: 24px; background: #d8d8d8; display: flex; align-items: center; }
.model { width: 63px; height: 24px; background: #f5f5f5; display: flex; align-items: center; justify-content: space-between; padding: 0 7px 0 3px; color: #444; letter-spacing: -.2px; }
.model svg { width: 10px; height: 10px; }
.plus { width: 10px; height: 10px; margin-left: 5px; }
.find { width: 15px; height: 15px; margin-left: 122px; }
.menu { width: 14px; height: 12px; margin-left: 7px; }
.modes { height: 41px; display: flex; align-items: center; padding-left: 6px; letter-spacing: -.35px; }
.modes span { height: 21px; padding: 0 3px; line-height: 20px; }
.modes .on { color: #1c86c8; border-bottom: 1px solid #1c9ad0; padding: 0 6px 0 4px; width: 65px; letter-spacing: -.2px; }
.modes i { width: 2px; height: 18px; background: #777; margin: 0 6px 0 6px; }
.root { height: 26px; display: flex; align-items: center; font-weight: 700; padding-left: 7px; color: #111; letter-spacing: -.05px; }
.bolt { width: 11px; height: 17px; margin-right: 8px; }
.asm { width: 18px; height: 18px; margin-right: 5px; }
.tree { list-style: none; margin: 0; padding: 0; background: repeating-linear-gradient(#999 0 1px, transparent 1px 3px) 10px 0 / 1px 560px no-repeat; }
.tree li { height: 25px; display: flex; align-items: center; }
.tree li i { width: 10px; height: 10px; margin-left: 5px; outline: 3px solid #f5f5f5; background: linear-gradient(#888, #888) 4px 0 / 2px 10px no-repeat, linear-gradient(#888, #888) 0 4px / 10px 2px no-repeat, #f5f5f5; }
.tree li svg { width: 20px; height: 18px; margin-left: 8px; margin-right: 4px; }

/* graphics area */
.docarea { flex: 1; display: flex; flex-direction: column; }
.viewport { height: 791px; position: relative; overflow: hidden; background:
  linear-gradient(rgba(120,140,170,0) 82%, rgba(120,142,178,.35) 100%),
  radial-gradient(ellipse 1230px 890px at 49% 82%, #dbe6f7 0%, #d3dff0 28%, #bfcce0 58%, #a9b7cc 82%, #98a6be 100%); }
.scene { width: 1675px; height: 791px; }
.mark { fill: #dfe6f5; font-family: "Liberation Sans", sans-serif; }
.ax { font: 11px "Liberation Sans", sans-serif; }
.shade { fill: #7788a5; opacity: .5; filter: blur(3px); }
.cubetext { font: 700 11px "Open Sans", sans-serif; fill: #76829a; }
.cubetext.low { font-size: 9px; }
.wincontrols { position: absolute; right: 1px; top: 6px; display: flex; gap: 9px; }
.wincontrols svg { width: 12px; height: 11px; }
.navbar { position: absolute; right: 0; top: 145px; width: 34px; height: 230px; }
.doctabs { height: 30px; background: #d9d9d9; display: flex; align-items: center; }
.dhome { width: 20px; height: 20px; margin: 0 9px 4px 5px; }
.doc { width: 134px; height: 30px; background: #eee; border-bottom: 4px solid #45a6d3; color: #2789ca; display: flex; align-items: center; justify-content: space-between; padding: 0 14px 3px 11px; letter-spacing: -.6px; }
.doc svg { width: 11px; height: 11px; }
.dmenu { width: 18px; height: 16px; margin-left: auto; margin-right: 5px; }

.status { height: 29px; background: #ededed; display: flex; color: #444; line-height: 32px; letter-spacing: -.2px; }
.status span { flex: 1; }
.status b { width: 40px; font-weight: 400; line-height: 27px; padding-left: 10px; border-left: 1px solid #ccc; margin-top: 1px; }
.status b:last-child { width: 39px; }

/* taskbar */
.taskbar { height: 50px; display: flex; color: #fff; font-size: 17px; white-space: nowrap; background: linear-gradient(90deg, #4a2332 0, #41171f 490px, #451b20 570px, #442b22 650px, #452a23 1300px, #46211f 1360px, #301a26 1450px, #21282f 1500px, #213639 1560px, #20373a 1920px); }
.start { width: 60px; padding: 15px 0 0 20px; }
.start svg { width: 20px; height: 20px; }
.search { width: 430px; background: #f2f2f2; border: 1px solid #bbb; color: #333; font-size: 18px; display: flex; align-items: center; padding-left: 14px; gap: 14px; letter-spacing: -.1px; }
.search svg { width: 21px; height: 21px; }
.pins { width: 704px; display: flex; align-items: center; }
.k1 { width: 20px; height: 20px; margin-left: 20px; }
.k2 { width: 21px; height: 20px; margin-left: 39px; }
.k3 { width: 31px; height: 30px; margin-left: 38px; }
.k4 { width: 28px; height: 24px; margin-left: 33px; }
.k5 { width: 31px; height: 28px; margin-left: 32px; }
.k6 { width: 29px; height: 25px; margin-left: 32px; }
.k7 { width: 30px; height: 30px; margin-left: 33px; }
.inv { width: 61px; height: 50px; margin-left: 17px; background: #6c5550; border-bottom: 3px solid #76b9ed; padding: 10px 0 0 15px; }
.inv > div { width: 30px; height: 30px; background: linear-gradient(135deg, #fff1e2, #f3b98a); display: flex; flex-direction: column; align-items: center; padding-top: 3px; }
.inv svg { width: 12px; height: 18px; }
.inv small { font-size: 6px; line-height: 7px; color: #c46f24; align-self: flex-end; padding-right: 1px; }
.tray { flex: 1; display: flex; align-items: center; }
.y1 { width: 30px; height: 28px; margin-left: -1px; }
.y2 { width: 28px; height: 24px; margin-left: 42px; }
.temp { width: 48px; padding-left: 10px; letter-spacing: -.6px; }
.sky { width: 125px; padding-left: 10px; letter-spacing: .12px; }
.y3 { width: 16px; height: 9px; margin-left: 23px; }
.y4 { width: 20px; height: 13px; margin-left: 22px; }
.y5 { width: 20px; height: 20px; margin-left: 20px; background: #3f9c43; border-radius: 2px; font-weight: 700; font-size: 16px; line-height: 19px; text-align: center; }
.y6 { width: 19px; height: 12px; margin-left: 21px; }
.y7 { width: 16px; height: 16px; margin-left: 23px; }
.y8 { width: 22px; height: 16px; margin-left: 20px; }
.lang { width: 32px; margin-left: 17px; font-size: 15px; letter-spacing: -.5px; }
.clock { width: 90px; margin-left: 6px; text-align: center; font-size: 14.5px; line-height: 23px; }
.y9 { width: 32px; height: 32px; margin-left: 16px; margin-top: 6px; }
.badge { font-size: 13px; fill: #fff; }
```
